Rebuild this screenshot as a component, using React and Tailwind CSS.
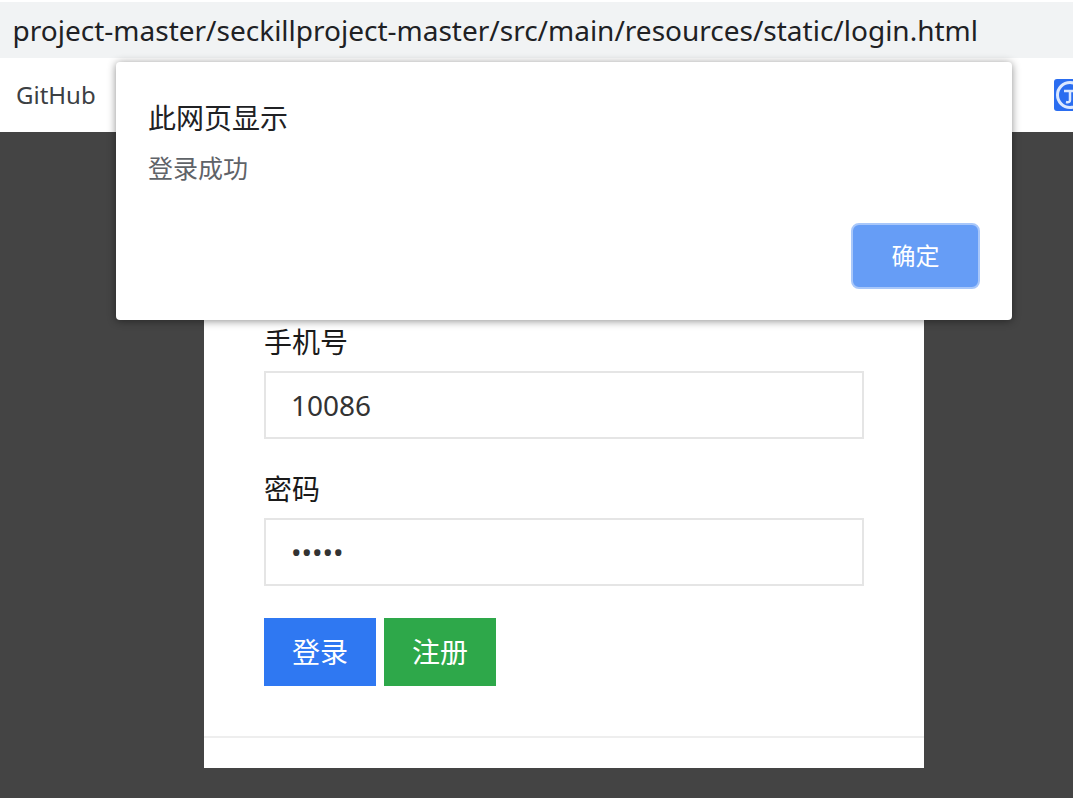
const FONT = "font-['Noto_Sans','Noto_Sans_CJK_SC',sans-serif]";

function SiteIcon() {
  return (
    <svg viewBox="0 0 32 32" className="h-8 w-8 shrink-0">
      <rect width="32" height="32" rx="3" fill="#2a6df0" />
      <circle cx="16" cy="16" r="12.5" fill="none" stroke="#dbe8ff" strokeWidth="3" />
      <path d="M10 12h11M16 12v9q0 3-4 2" fill="none" stroke="#dbe8ff" strokeWidth="2.5" />
    </svg>
  );
}

function Field({ label, value, type }) {
  return (
    <div className="mb-[30px]">
      <label className="mb-[9px] block text-[28px] leading-[40px] text-[#1a1a1a]">{label}</label>
      <input
        readOnly
        type={type}
        value={value}
        className="block h-[68px] w-[600px] border-2 border-[#e5e5e5] bg-white px-[25px] text-[28px] text-[#333333] outline-none"
      />
    </div>
  );
}

function AlertDialog() {
  return (
    <div className="absolute left-[116px] top-[62px] z-10 flex h-[258px] w-[896px] flex-col rounded-[4px] bg-white px-8 pb-[31px] pt-[34px] shadow-[0_1px_8px_rgba(0,0,0,0.45)]">
      <h2 className="text-[28px] leading-[44px] text-[#202124]">此网页显示</h2>
      <p className="mt-[10px] text-[25px] leading-[36px] text-[#5f6368]">登录成功</p>
      <div className="mt-auto flex justify-end">
        <button className="h-[66px] w-[129px] rounded-[8px] border-2 border-[#a8c7fa] bg-[#669df6] text-[24px] text-white">
          确定
        </button>
      </div>
    </div>
  );
}

export default function App() {
  return (
    <div className={`relative flex h-[798px] w-[1073px] flex-col overflow-hidden bg-[#444444] ${FONT}`}>
      <div className="flex h-[58px] shrink-0 items-center justify-end whitespace-nowrap border-t-2 border-white bg-[#f1f3f4] pr-[95px] text-[28px] text-[#202124]">
        project-master/seckillproject-master/src/main/resources/static/login.html
      </div>
      <div className="flex h-[74px] shrink-0 items-center justify-between overflow-hidden bg-white pl-4 pr-0">
        <span className="text-[24px] text-[#3c4043]">GitHub</span>
        <div className="-mr-[13px]">
          <SiteIcon />
        </div>
      </div>
      <div className="ml-[204px] flex h-[636px] w-[720px] flex-col justify-end bg-white">
        <div className="border-b-2 border-[#eeeeee] px-[60px] pb-[50px]">
          <Field label="手机号" value="10086" type="text" />
          <Field label="密码" value="12345" type="password" />
          <div className="mt-[32px] flex gap-2">
            <button className="h-[68px] w-[112px] bg-[#2f78f2] text-[28px] text-white">登录</button>
            <button className="h-[68px] w-[112px] bg-[#2ea84a] text-[28px] text-white">注册</button>
          </div>
        </div>
        <div className="h-[30px]" />
      </div>
      <AlertDialog />
    </div>
  );
}
